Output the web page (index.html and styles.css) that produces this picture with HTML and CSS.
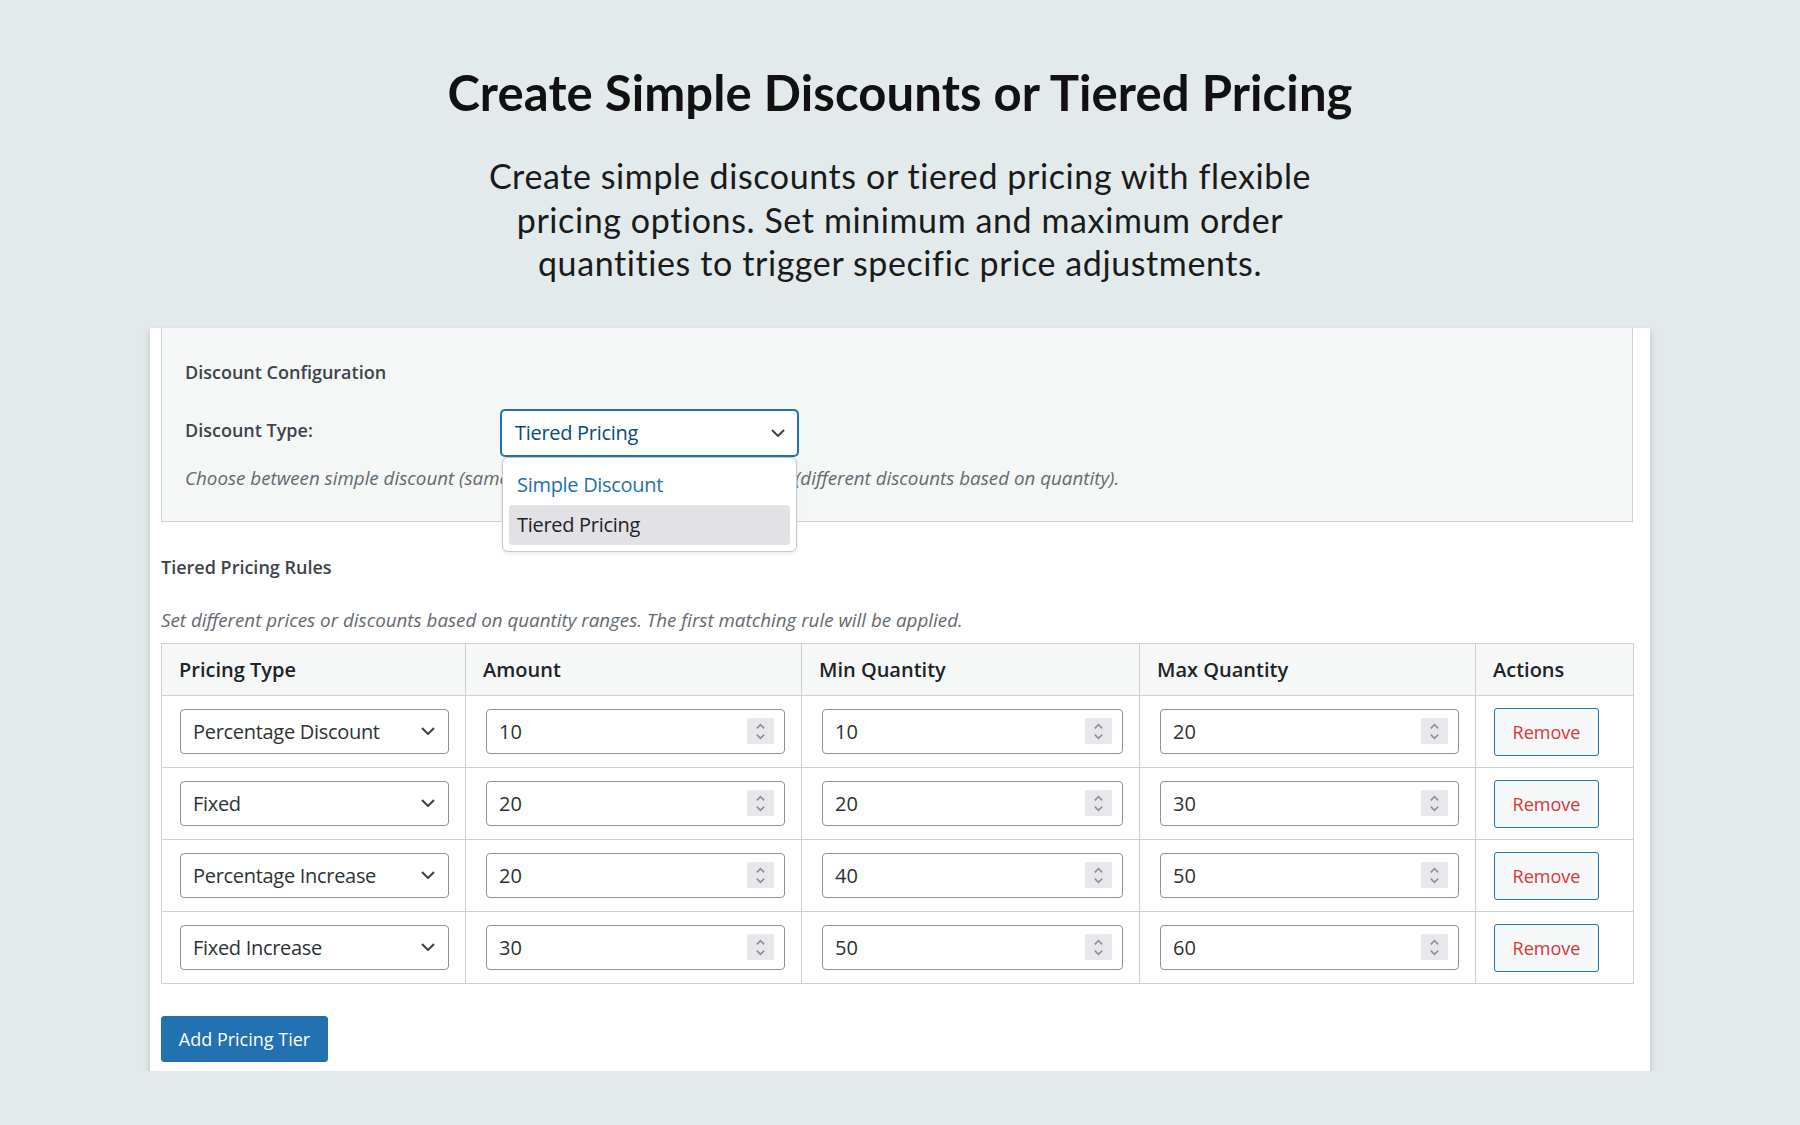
FILE: index.html
```html
<!DOCTYPE html>
<html>
<head>
    <link rel="stylesheet" href="styles.css">
</head>
<body>
    <!-- Intro heading -->
    <header class="intro">
        <h1 class="intro-title">Create Simple Discounts or Tiered Pricing</h1>
        <p class="intro-text">Create simple discounts or tiered pricing with flexible<br>pricing options. Set minimum and maximum order<br>quantities to trigger specific price adjustments.</p>
    </header>

    <main class="panel">
        <!-- Discount configuration box -->
        <section class="config">
            <h3 class="section-title">Discount Configuration</h3>
            <div class="field-row">
                <label class="field-label">Discount Type:</label>
                <div class="field-control">
                    <div class="select select-focus">
                        <span>Tiered Pricing</span>
                        <svg class="chevron" viewBox="0 0 14 8"><path d="M1,1 L7,7 L13,1"/></svg>
                    </div>
                    <ul class="menu">
                        <li class="menu-item menu-hover">Simple Discount</li>
                        <li class="menu-item menu-selected">Tiered Pricing</li>
                    </ul>
                </div>
            </div>
            <p class="help">Choose between simple discount (same discount, for all), or tiered pricing (different discounts based on quantity).</p>
        </section>

        <!-- Tier rules -->
        <h3 class="section-title rules-title">Tiered Pricing Rules</h3>
        <p class="help rules-help">Set different prices or discounts based on quantity ranges. The first matching rule will be applied.</p>

        <table class="tiers">
            <colgroup>
                <col style="width:304px">
                <col style="width:336px">
                <col style="width:338px">
                <col style="width:336px">
                <col style="width:158px">
            </colgroup>
            <thead>
                <tr>
                    <th>Pricing Type</th>
                    <th>Amount</th>
                    <th>Min Quantity</th>
                    <th>Max Quantity</th>
                    <th>Actions</th>
                </tr>
            </thead>
            <tbody id="tier-rows"></tbody>
        </table>

        <button class="btn-primary">Add Pricing Tier</button>
    </main>

    <script>
        const tiers = [
            { type: 'Percentage Discount', amount: 10, min: 10, max: 20 },
            { type: 'Fixed', amount: 20, min: 20, max: 30 },
            { type: 'Percentage Increase', amount: 20, min: 40, max: 50 },
            { type: 'Fixed Increase', amount: 30, min: 50, max: 60 }
        ];

        const chevron = '<svg class="chevron" viewBox="0 0 14 8"><path d="M1,1 L7,7 L13,1"/></svg>';
        const spinner = '<span class="spin"><svg viewBox="0 0 10 18"><path d="M1.5,6 L5,2.5 L8.5,6"/><path d="M1.5,12 L5,15.5 L8.5,12"/></svg></span>';

        const numberBox = (v) => `<div class="number"><span>${v}</span>${spinner}</div>`;

        document.getElementById('tier-rows').innerHTML = tiers.map(t => `
            <tr>
                <td><div class="select"><span>${t.type}</span>${chevron}</div></td>
                <td>${numberBox(t.amount)}</td>
                <td>${numberBox(t.min)}</td>
                <td>${numberBox(t.max)}</td>
                <td><button class="btn-remove">Remove</button></td>
            </tr>`).join('');
    </script>
</body>
</html>
```

FILE: styles.css
```css
body {
    margin: 0;
    background: #e3eaec;
    color: #1d2327;
    font-family: "Open Sans", "Noto Sans", sans-serif;
}
.intro {
    text-align: center;
    padding-top: 63px;
}
.intro-title {
    margin: 0;
    font-family: Lato, "Open Sans", sans-serif;
    font-size: 49px;
    line-height: 58px;
    font-weight: 700;
    letter-spacing: 0.1px;
    color: #111;
}
.intro-text {
    margin: 33px 0 0;
    font-family: Lato, "Open Sans", sans-serif;
    font-size: 34px;
    line-height: 43.5px;
    letter-spacing: 0.6px;
    color: #1a1a1a;
}
.panel {
    width: 1500px;
    box-sizing: border-box;
    margin: 43px auto 0;
    padding: 0 17px 9px 11px;
    background: #fff;
    box-shadow: 0 4px 8px rgba(0, 0, 0, 0.18);
}
.config {
    background: #f5f7f7;
    border: 1px solid #d0d3d6;
    border-top: none;
    padding: 32px 23px 32px;
}
.section-title {
    margin: 0;
    font-size: 18px;
    line-height: 25px;
    font-weight: 600;
    color: #3c434a;
}
.field-row {
    display: flex;
    align-items: center;
    margin-top: 25px;
}
.field-label {
    width: 316px;
    font-size: 18px;
    font-weight: 600;
    color: #3c434a;
    margin-top: -6px;
}
.field-control {
    position: relative;
}
.select {
    display: flex;
    align-items: center;
    justify-content: space-between;
    box-sizing: border-box;
    height: 45px;
    padding: 0 13px 0 12px;
    background: #fff;
    border: 1px solid #8c8f94;
    border-radius: 4px;
    font-size: 20px;
    letter-spacing: -0.3px;
    color: #2c3338;
}
.select-focus {
    width: 297px;
    height: 46px;
    padding: 0 12px 0 13px;
    border-color: #2271b1;
    box-shadow: 0 0 0 1px #2271b1;
    color: #0a4b78;
}
.chevron {
    width: 14px;
    height: 8px;
    fill: none;
    stroke: #3c434a;
    stroke-width: 2;
}
.menu {
    position: absolute;
    top: 47px;
    left: 1px;
    width: 295px;
    box-sizing: border-box;
    margin: 0;
    padding: 7px 6px 6px;
    list-style: none;
    background: #fff;
    border: 1px solid #c6c7ca;
    border-radius: 6px;
    box-shadow: 0 2px 4px rgba(0, 0, 0, 0.08);
    z-index: 2;
}
.menu-item {
    height: 40px;
    line-height: 40px;
    padding: 0 8px;
    font-size: 20px;
    letter-spacing: -0.3px;
    border-radius: 4px;
}
.menu-hover {
    color: #2271b1;
}
.menu-selected {
    background: #e1e1e6;
    color: #1d2327;
}
.help {
    margin: 11px 0 0;
    font-size: 18.8px;
    line-height: 22px;
    font-style: italic;
    color: #646970;
}
.rules-title {
    margin-top: 33px;
}
.rules-help {
    margin-top: 29px;
}
.tiers {
    width: 1472px;
    margin-top: 12px;
    border-collapse: collapse;
    table-layout: fixed;
    border: 1px solid #d0d0d4;
}
.tiers th {
    height: 51px;
    padding: 0 16px 0 17px;
    text-align: left;
    font-size: 20px;
    font-weight: 600;
    color: #1d2327;
    background: #f6f7f7;
    border: 1px solid #d0d0d4;
}
.tiers td {
    height: 71px;
    padding: 0 16px 0 20px;
    border: 1px solid #d0d0d4;
}
.tiers td:first-child {
    padding-left: 18px;
}
.tiers td:last-child {
    padding-left: 18px;
}
.number {
    display: flex;
    align-items: center;
    justify-content: space-between;
    box-sizing: border-box;
    height: 45px;
    padding: 0 10px 0 12px;
    background: #fff;
    border: 1px solid #8c8f94;
    border-radius: 4px;
    font-size: 20px;
    color: #2c3338;
}
.spin {
    display: flex;
    align-items: center;
    justify-content: center;
    width: 27px;
    height: 26px;
    background: #e8e8ec;
}
.spin svg {
    width: 11px;
    height: 19px;
    fill: none;
    stroke: #8c8f94;
    stroke-width: 1.5;
}
.btn-remove {
    display: block;
    width: 105px;
    height: 48px;
    padding: 0;
    margin-top: 2px;
    font-family: inherit;
    font-size: 18px;
    color: #d63638;
    background: #f6f7f7;
    border: 1px solid #2271b1;
    border-radius: 3px;
}
.btn-primary {
    display: block;
    margin-top: 32px;
    width: 167px;
    height: 46px;
    padding: 0;
    font-family: inherit;
    font-size: 18px;
    color: #fff;
    background: #2271b1;
    border: 1px solid #2271b1;
    border-radius: 3px;
}
```
